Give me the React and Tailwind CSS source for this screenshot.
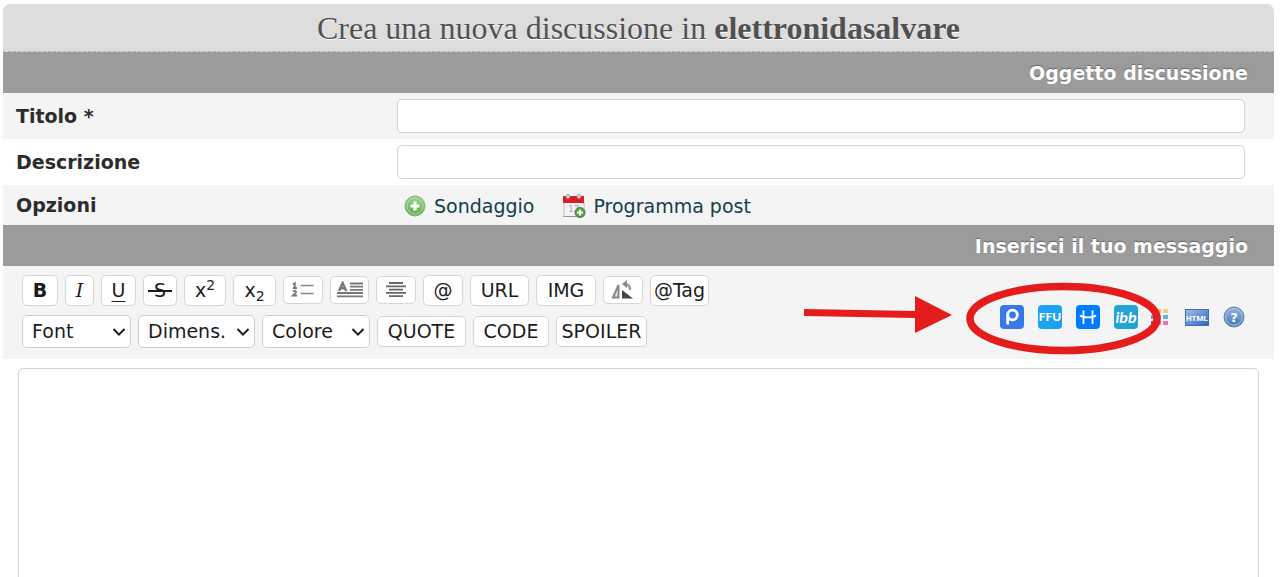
import { useState } from "react";

const btn = "shrink-0 flex items-center justify-center bg-white border border-[#d6d6d6] rounded-[5px] text-[#1c1c1c] text-[19px] leading-6 cursor-pointer";

function ToolButton({ label, size, children }) {
  return (
    <button type="button" title={label} aria-label={label} className={`${btn} ${size}`}>
      {children}
    </button>
  );
}

function ToolSelect({ label, size, options }) {
  return (
    <div className={`relative shrink-0 ${size}`}>
      <select
        aria-label={label}
        className="appearance-none w-full h-[33px] bg-white border border-[#cfcfcf] rounded-[5px] pl-[9px] text-[19px] leading-6 text-[#1c1c1c]"
      >
        <option>{label}</option>
        {options.map((o) => <option key={o}>{o}</option>)}
      </select>
      <svg className="absolute right-[5px] top-[12px] pointer-events-none" width="14" height="10" viewBox="0 0 14 10" fill="none" stroke="#1c1c1c" strokeWidth="2">
        <path d="M1.5 2 L7 7.6 L12.5 2" />
      </svg>
    </div>
  );
}

function SectionBar({ children }) {
  return (
    <h2 className="h-[41px] bg-[#9b9b9b] pt-[2px] pr-[26px] flex items-center justify-end text-white text-[19px] font-bold [text-shadow:0_-1px_1px_#666]">
      {children}
    </h2>
  );
}

function AddIcon() {
  return (
    <svg width="22" height="22" viewBox="0 0 22 22">
      <defs>
        <linearGradient id="addGreen" x1="0" y1="0" x2="0" y2="1">
          <stop offset="0" stopColor="#a5d695" />
          <stop offset="1" stopColor="#55a546" />
        </linearGradient>
      </defs>
      <circle cx="11" cy="11" r="10" fill="url(#addGreen)" stroke="#7eb873" />
      <circle cx="11" cy="11" r="8" fill="none" stroke="#b4dca6" />
      <path d="M11 6.5v9M6.5 11h9" stroke="#fff" strokeWidth="3.2" />
    </svg>
  );
}

function CalendarIcon() {
  return (
    <svg width="24" height="24" viewBox="0 0 24 24">
      <path d="M2 8h20v14.5H2z" fill="#f3f3f3" stroke="#bcbcbc" />
      <path d="M1 2h21v7H1z" fill="#dc1c20" />
      <path d="M1 22.5h16" stroke="#999" />
      <circle cx="6" cy="2.5" r="2" fill="#ddd" stroke="#999" />
      <circle cx="17" cy="2.5" r="2" fill="#ddd" stroke="#999" />
      <text x="6" y="18" fontSize="9" fill="#aaa" fontFamily="DejaVu Sans, sans-serif">17</text>
      <circle cx="18" cy="18.5" r="5" fill="#5d9d45" stroke="#477f35" />
      <path d="M18 15.5v6M15 18.5h6" stroke="#fff" strokeWidth="2" />
    </svg>
  );
}

function ListIcon() {
  return (
    <svg width="24" height="18" viewBox="0 0 24 18" stroke="#777" strokeWidth="1.4" fill="none">
      <path d="M9.5 4.5h13M9.5 12.5h13" stroke="#888" strokeWidth="1.7" />
      <path d="M2 3.5l1.8-1.3V7M2 7h4M2 10.5c1-1.2 3.5-.8 3 .8L2 14.5h4" strokeWidth="1.8" />
    </svg>
  );
}

function FloatIcon() {
  return (
    <svg width="28" height="18" viewBox="0 0 28 18" stroke="#777" strokeWidth="1.8" fill="none">
      <path d="M14 2.5h13M14 5.7h13M14 8.8h13M1 12h26M1 15.4h26" />
      <path d="M3 10L6.6 2L10.2 10M4.3 7.2h4.6" strokeWidth="2.4" />
    </svg>
  );
}

function CenterIcon() {
  return (
    <svg width="22" height="18" viewBox="0 0 22 18" stroke="#666" strokeWidth="1.8">
      <path d="M4 2h14M1 5.3h20M4 8.6h14M1 11.9h20M4 15.2h14" />
    </svg>
  );
}

function RotateIcon() {
  return (
    <svg width="24" height="20" viewBox="0 0 24 20">
      <path d="M7.5 5v12.5H2z" fill="#e2e2e2" stroke="#888" strokeWidth="2" />
      <path d="M11 10L22 18.5H11z" fill="#444" />
      <path d="M13 4.8c4-1 6.5 1.5 6 5.2" fill="none" stroke="#999" strokeWidth="2.6" />
      <path d="M16 0v8l-5-4z" fill="#888" />
    </svg>
  );
}

function PostImageIcon() {
  return (
    <svg width="24" height="24" viewBox="0 0 24 24">
      <rect width="24" height="24" rx="4" fill="#3b78e7" />
      <circle cx="12.5" cy="10" r="4.8" fill="none" stroke="#fff" strokeWidth="2.8" />
      <path d="M7.7 10v9.500" stroke="#fff" strokeWidth="2.8" />
    </svg>
  );
}

function FfuIcon() {
  return (
    <svg width="24" height="24" viewBox="0 0 24 24">
      <rect width="24" height="24" rx="4" fill="#1da1f2" />
      <text x="12" y="16" fontSize="12" fontWeight="900" textAnchor="middle" fill="#fff" fontFamily="Lato, sans-serif">FFU</text>
    </svg>
  );
}

function HostIcon() {
  return (
    <svg width="24" height="24" viewBox="0 0 24 24">
      <rect width="24" height="24" rx="4" fill="#007bff" />
      <path d="M7.5 5.5v13.5M16.5 5.5v13.5" fill="none" stroke="#fff" strokeWidth="1.8" />
      <path d="M4 10.5c3.5 2.5 12.5 2.5 16 0" fill="none" stroke="#fff" strokeWidth="1.8" />
    </svg>
  );
}

function IbbIcon() {
  return (
    <svg width="24" height="24" viewBox="0 0 24 24">
      <rect width="24" height="24" rx="4" fill="#24a3d8" />
      <text x="12" y="17.5" fontSize="16" fontWeight="bold" fontStyle="italic" textAnchor="middle" fill="#fff" fontFamily="Lato, sans-serif">ibb</text>
    </svg>
  );
}

function PaletteIcon() {
  return (
    <svg width="24" height="24" viewBox="0 0 24 24">
      <path d="M3 4h4v4H3z" fill="#f3a06a" />
      <path d="M9 4h4v4H9z" fill="#f5b56a" />
      <path d="M15 4h5v4h-5z" fill="#f8cf6a" />
      <path d="M3 10h4v4H3z" fill="#7b8bd0" />
      <path d="M9 10h4v4H9z" fill="#a4ce70" />
      <path d="M15 10h5v4h-5z" fill="#5fb3e8" />
      <path d="M3 16h4v4H3z" fill="#6468b0" />
      <path d="M9 16h4v4H9z" fill="#c977c0" />
      <path d="M15 16h5v4h-5z" fill="#f36fae" />
    </svg>
  );
}

function HtmlIcon() {
  return (
    <svg width="24" height="24" viewBox="0 0 24 24">
      <defs>
        <linearGradient id="htmlBlue" x1="0" y1="0" x2="1" y2="1">
          <stop offset="0" stopColor="#9dbfe9" />
          <stop offset="1" stopColor="#2f63bd" />
        </linearGradient>
      </defs>
      <rect x="0.5" y="4.5" width="23" height="16" fill="url(#htmlBlue)" stroke="#3d6cbc" />
      <text x="12" y="15.5" fontSize="8" fontWeight="bold" textAnchor="middle" fill="#fff" fontFamily="Roboto, sans-serif">HTML</text>
    </svg>
  );
}

function HelpIcon() {
  return (
    <svg width="24" height="24" viewBox="0 0 24 24">
      <defs>
        <linearGradient id="helpBlue" x1="0" y1="0" x2="0" y2="1">
          <stop offset="0" stopColor="#95b4dc" />
          <stop offset="1" stopColor="#4676b4" />
        </linearGradient>
      </defs>
      <circle cx="12" cy="12" r="10" fill="url(#helpBlue)" stroke="#5d80ae" />
      <circle cx="12" cy="12" r="8.3" fill="none" stroke="#a9c3e4" />
      <text x="12" y="16.5" fontSize="13" fontWeight="bold" textAnchor="middle" fill="#fff" fontFamily="DejaVu Sans, sans-serif">?</text>
    </svg>
  );
}

const hosts = [
  { name: "Postimage", Icon: PostImageIcon },
  { name: "FFU", Icon: FfuIcon },
  { name: "Host", Icon: HostIcon },
  { name: "ibb", Icon: IbbIcon },
];

const extras = [
  { name: "Palette", Icon: PaletteIcon },
  { name: "HTML", Icon: HtmlIcon },
  { name: "Help", Icon: HelpIcon },
];

function IconButton({ name, Icon }) {
  return <button type="button" title={name} aria-label={name} className="cursor-pointer"><Icon /></button>;
}

export default function App() {
  const [title, setTitle] = useState("");
  const [desc, setDesc] = useState("");
  const [message, setMessage] = useState("");

  const row = "grid grid-cols-[31%_1fr] items-center";
  const rowLabel = "pl-[13px] text-[19px] font-bold text-[#2c2c2c]";
  const field = "w-full h-[34px] bg-white border border-[#d2d2d2] rounded-[5px] px-2 text-[19px] outline-none";

  return (
    <div className="min-h-screen bg-white pt-1 pl-[3px] pr-[6px] font-['DejaVu_Sans',sans-serif]">
      <form onSubmit={(e) => e.preventDefault()}>
        <h1 className="h-12 bg-[#dddddd] rounded-t-[7px] border-b border-dashed border-[#b5b5b5] flex items-center justify-center text-[#515151] text-[32px] leading-9 whitespace-pre font-['Liberation_Serif',serif] [text-shadow:0_1px_0_#fff]">
          Crea una nuova discussione in <b>elettronidasalvare</b>
        </h1>

        <SectionBar>Oggetto discussione</SectionBar>
        <div className={`${row} h-[46px] bg-[#f4f4f4]`}>
          <label htmlFor="title" className={rowLabel}>Titolo *</label>
          <div className="pr-[29px]">
            <input id="title" type="text" className={field} value={title} onChange={(e) => setTitle(e.target.value)} />
          </div>
        </div>
        <div className={`${row} h-[46px]`}>
          <label htmlFor="desc" className={rowLabel}>Descrizione</label>
          <div className="pr-[29px]">
            <input id="desc" type="text" className={field} value={desc} onChange={(e) => setDesc(e.target.value)} />
          </div>
        </div>
        <div className={`${row} h-10 bg-[#f4f4f4]`}>
          <span className={rowLabel}>Opzioni</span>
          <div className="flex items-center gap-7 pt-[2px] pl-[7px] text-[19px] text-[#133f4a]">
            <a href="#sondaggio" className="flex items-center gap-2"><AddIcon />Sondaggio</a>
            <a href="#programma" className="flex items-center gap-[7px]"><CalendarIcon />Programma post</a>
          </div>
        </div>

        <SectionBar>Inserisci il tuo messaggio</SectionBar>
        <div className="h-[93px] bg-[#f4f4f4] pl-[19px] pr-[28px] flex items-center justify-between">
          <div className="flex flex-col gap-[9px] pb-[3px]">
            <div className="flex items-center gap-[7px]">
              <ToolButton label="Grassetto" size="w-[36px] h-[31px]"><b>B</b></ToolButton>
              <ToolButton label="Corsivo" size="w-[29px] h-[31px]"><i className="font-['DejaVu_Serif',serif]">I</i></ToolButton>
              <ToolButton label="Sottolineato" size="w-[35px] h-[31px]"><u className="underline-offset-4">U</u></ToolButton>
              <ToolButton label="Barrato" size="w-[34px] h-[31px]"><s className="whitespace-pre decoration-2"> S </s></ToolButton>
              <ToolButton label="Apice" size="w-[42px] h-[31px]"><span>x<sup className="text-sm">2</sup></span></ToolButton>
              <ToolButton label="Pedice" size="w-[43px] h-[31px]"><span>x<sub className="text-sm">2</sub></span></ToolButton>
              <ToolButton label="Lista" size="w-[40px] h-[28px]"><ListIcon /></ToolButton>
              <ToolButton label="Float" size="w-[39px] h-[28px]"><FloatIcon /></ToolButton>
              <ToolButton label="Centra" size="w-[40px] h-[28px]"><CenterIcon /></ToolButton>
              <ToolButton label="Email" size="w-[40px] h-[31px]">@</ToolButton>
              <ToolButton label="URL" size="w-[59px] h-[31px]">URL</ToolButton>
              <ToolButton label="IMG" size="w-[60px] h-[31px]">IMG</ToolButton>
              <ToolButton label="Ruota" size="w-[40px] h-[28px]"><RotateIcon /></ToolButton>
              <ToolButton label="Tag" size="w-[59px] h-[31px]">@Tag</ToolButton>
            </div>
            <div className="flex items-center gap-[7px]">
              <ToolSelect label="Font" size="w-[109px]" options={["Arial", "Verdana", "Georgia"]} />
              <ToolSelect label="Dimens." size="w-[117px]" options={["1", "2", "3"]} />
              <ToolSelect label="Colore" size="w-[108px]" options={["Rosso", "Verde", "Blu"]} />
              <ToolButton label="Quote" size="w-[89px] h-[31px]">QUOTE</ToolButton>
              <ToolButton label="Code" size="w-[76px] h-[31px]">CODE</ToolButton>
              <ToolButton label="Spoiler" size="w-[91px] h-[31px]">SPOILER</ToolButton>
            </div>
          </div>

          <div className="relative shrink-0 flex items-center gap-[10px] pt-2">
            <div className="flex gap-[14px]">
              {hosts.map((h) => <IconButton key={h.name} {...h} />)}
            </div>
            <div className="flex gap-[13px]">
              {extras.map((h) => <IconButton key={h.name} {...h} />)}
            </div>
            {/* red arrow + circle around the image hosts */}
            <svg className="absolute -left-[196px] -top-[17px] max-w-none pointer-events-none" width="365" height="77" viewBox="804 280 365 77">
              <path d="M804 309L915 311V296L952 315L915 333V318L804 316z" fill="#e51c1c" />
              <ellipse cx="1063.5" cy="318.5" rx="93.5" ry="32" fill="none" stroke="#e51c1c" strokeWidth="7.5" />
            </svg>
          </div>
        </div>

        <div className="pt-[9px] pl-[15px] pr-[15px]">
          <textarea
            aria-label="Messaggio"
            className="block w-full h-[209px] resize-none bg-white border border-b-0 border-[#d2d2d2] rounded-t-[5px] p-2 text-[19px] outline-none"
            value={message}
            onChange={(e) => setMessage(e.target.value)}
          />
        </div>
      </form>
    </div>
  );
}
